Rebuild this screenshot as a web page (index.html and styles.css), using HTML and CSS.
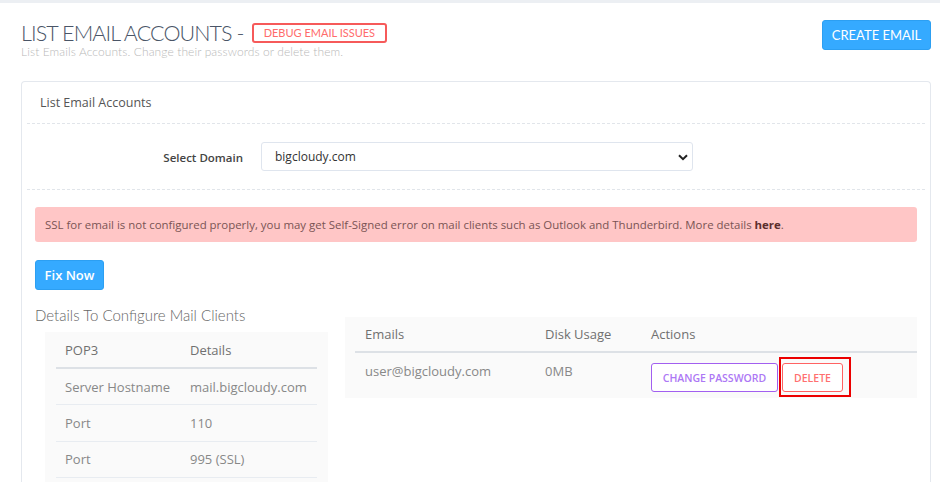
FILE: index.html
```html
<!DOCTYPE html>
<html lang="en">
<head>
<meta charset="utf-8">
<title>List Email Accounts</title>
<link rel="stylesheet" href="styles.css">
</head>
<body>
<div class="topbar"></div>
<main class="page">
  <header class="page-head">
    <div class="head-text">
      <h1 class="title">LIST EMAIL ACCOUNTS - <a class="debug-link" href="#">DEBUG EMAIL ISSUES</a></h1>
      <p class="subtitle">List Emails Accounts. Change their passwords or delete them.</p>
    </div>
    <a class="btn btn-create" href="#">CREATE EMAIL</a>
  </header>

  <section class="card">
    <div class="card-title">List Email Accounts</div>

    <div class="form-row">
      <label class="form-label" for="domain">Select Domain</label>
      <div class="select-wrap">
        <select id="domain" class="select">
          <option>bigcloudy.com</option>
        </select>
        <svg class="chev" width="10" height="7" viewBox="0 0 10 7"><path d="M1 1.2 5 5.2 9 1.2" fill="none" stroke="#222" stroke-width="2"/></svg>
      </div>
    </div>

    <div class="card-body">
      <div class="alert">SSL for email is not configured properly, you may get Self-Signed error on mail clients such as Outlook and Thunderbird. More details <b>here</b>.</div>
      <a class="btn btn-fix" href="#">Fix Now</a>

      <div class="columns">
        <div class="col-left">
          <h3 class="sub-head">Details To Configure Mail Clients</h3>
          <div class="panel panel-left">
            <table class="tbl tbl-details">
              <thead>
                <tr><th>POP3</th><th>Details</th></tr>
              </thead>
              <tbody>
                <tr><td>Server Hostname</td><td>mail.bigcloudy.com</td></tr>
                <tr><td>Port</td><td>110</td></tr>
                <tr><td>Port</td><td>995 (SSL)</td></tr>
              </tbody>
            </table>
          </div>
        </div>
        <div class="col-right">
          <div class="panel panel-right">
            <table class="tbl tbl-emails">
              <thead>
                <tr><th class="c-email">Emails</th><th class="c-disk">Disk Usage</th><th>Actions</th></tr>
              </thead>
              <tbody>
                <tr>
                  <td>user@bigcloudy.com</td>
                  <td>0MB</td>
                  <td class="actions">
                    <button class="btn-line btn-purple">CHANGE PASSWORD</button><span class="mark"><button class="btn-line btn-red">DELETE</button></span>
                  </td>
                </tr>
              </tbody>
            </table>
          </div>
        </div>
      </div>
    </div>
  </section>
</main>
</body>
</html>
```
FILE: styles.css
```css
* { box-sizing: border-box; }

html, body {
  margin: 0;
  background: #fff;
  font-family: "Open Sans", "Liberation Sans", sans-serif;
  color: #666;
}

body { height: 482px; overflow: hidden; }

.topbar {
  height: 3px;
  background: #eceff3;
}

.page {
  padding: 0 9px 0 21px;
}

/* page header */
.page-head {
  display: flex;
  justify-content: space-between;
  align-items: flex-start;
  padding-top: 17px;
}

.title {
  margin: 0;
  font-family: "Lato", "Liberation Sans", sans-serif;
  font-weight: 300;
  font-size: 21.5px;
  line-height: 26px;
  color: #4a5567;
  letter-spacing: -0.9px;
  display: flex;
  align-items: center;
  gap: 3px;
}

.debug-link {
  display: inline-block;
  font-family: "Lato", "Liberation Sans", sans-serif;
  font-weight: 400;
  font-size: 11px;
  line-height: 16px;
  letter-spacing: 0;
  color: #ff6b6b;
  text-decoration: none;
  border: 2px solid #f65a5a;
  border-radius: 3px;
  padding: 0 10px;
  margin-left: 5px;
}

.subtitle {
  margin: -1px 0 0;
  font-family: "Lato", "Liberation Sans", sans-serif;
  font-weight: 300;
  font-size: 12px;
  line-height: 14px;
  letter-spacing: 0.1px;
  color: #b9b9b9;
}

.btn {
  display: inline-block;
  text-decoration: none;
  color: #fff;
  background: #35aaff;
  border: 1px solid #2c9ff2;
  border-radius: 3px;
}

.btn-create {
  margin-top: 0;
  height: 30px;
  width: 109px;
  text-align: center;
  line-height: 28px;
  font-family: "Lato", "Liberation Sans", sans-serif;
  font-weight: 400;
  font-size: 13px;
}

/* card */
.card {
  margin-top: 22px;
  border: 1px solid #e4e8ee;
  border-bottom: 0;
  border-radius: 4px 4px 0 0;
  height: 420px;
}

.card-title {
  height: 42px;
  margin: 0 5px;
  padding-left: 13px;
  line-height: 41px;
  font-size: 12.5px;
  color: #555;
  border-bottom: 1px dashed #e1e5ea;
}

.form-row {
  display: flex;
  align-items: center;
  height: 66px;
  margin: 0 5px;
  border-bottom: 1px dashed #e1e5ea;
}

.form-label {
  width: 216px;
  text-align: right;
  font-size: 11.5px;
  font-weight: 600;
  color: #444;
  padding-top: 1px;
}

.select-wrap {
  position: relative;
  margin-left: 18px;
  width: 432px;
  height: 29px;
}

.select {
  appearance: none;
  -webkit-appearance: none;
  width: 100%;
  height: 100%;
  border: 1px solid #dfe5ee;
  border-radius: 3px;
  background: #fff;
  padding: 0 0 0 13px;
  font-family: "Open Sans", "Liberation Sans", sans-serif;
  font-size: 12px;
  color: #333;
}

.chev {
  position: absolute;
  right: 5px;
  top: 12px;
  pointer-events: none;
}

.card-body {
  padding: 17px 13px 0 13px;
}

.alert {
  height: 35px;
  background: #ffc6c6;
  border-radius: 3px;
  padding: 0 10px;
  font-size: 11.45px;
  line-height: 35px;
  color: #7a5454;
  white-space: nowrap;
}

.alert b {
  color: #5c2e2e;
  font-weight: 700;
}

.btn-fix {
  margin-top: 18px;
  height: 30px;
  width: 69px;
  text-align: center;
  line-height: 28px;
  font-size: 13px;
  font-weight: 600;
}

/* two columns below */
.columns {
  display: grid;
  grid-template-columns: 310px 572px;
  margin-top: 14px;
}

.sub-head {
  margin: 0;
  font-family: "Lato", "Liberation Sans", sans-serif;
  font-weight: 300;
  font-size: 15px;
  line-height: 22px;
  color: #666;
}

.panel {
  background: #fafafa;
}

.panel-left {
  margin: 6px 0 0 10px;
  width: 283px;
  padding: 0 11px;
  height: 160px;
}

.panel-right {
  margin-top: 13px;
  padding: 0 0 0 10px;
}

.tbl {
  width: 100%;
  border-collapse: collapse;
  font-size: 13px;
}

.tbl th {
  font-weight: 400;
  text-align: left;
  color: #707070;
}

.tbl td {
  color: #888;
}

.tbl-details th {
  height: 36px;
  padding: 0 0 0 9px;
  border-bottom: 2px solid #dde1e6;
}

.tbl-details td {
  height: 36.5px;
  padding: 0 0 0 9px;
  border-bottom: 1px solid #e8ecf1;
}

.tbl-details th:first-child,
.tbl-details td:first-child { width: 125px; }

.tbl-emails th {
  height: 35px;
  padding: 0 0 0 10px;
  border-bottom: 2px solid #dde1e6;
}

.tbl-emails td {
  height: 46px;
  padding: 9px 0 0 10px;
  vertical-align: top;
}

.tbl-emails .c-email { width: 180px; }
.tbl-emails .c-disk { width: 106px; }

.tbl-emails td.actions {
  padding-top: 0;
  vertical-align: top;
}

.actions { white-space: nowrap; }

.btn-line {
  height: 29px;
  background: #fff;
  border-radius: 3px;
  font-family: "Open Sans", "Liberation Sans", sans-serif;
  font-weight: 600;
  font-size: 10.5px;
  cursor: pointer;
  vertical-align: top;
}

.btn-purple {
  margin-top: 10px;
  width: 127px;
  border: 1.5px solid #a25ff0;
  color: #ad78f5;
  padding: 0;
}

.btn-red {
  width: 61px;
  border: 1.5px solid #ff6262;
  color: #ff7070;
  padding: 0;
}

/* highlight frame around the delete action */
.mark {
  display: inline-block;
  margin-left: 1px;
  margin-top: 4px;
  border: 2px solid #ec0000;
  padding: 4px 6px 3px 1px;
  vertical-align: top;
}
```
